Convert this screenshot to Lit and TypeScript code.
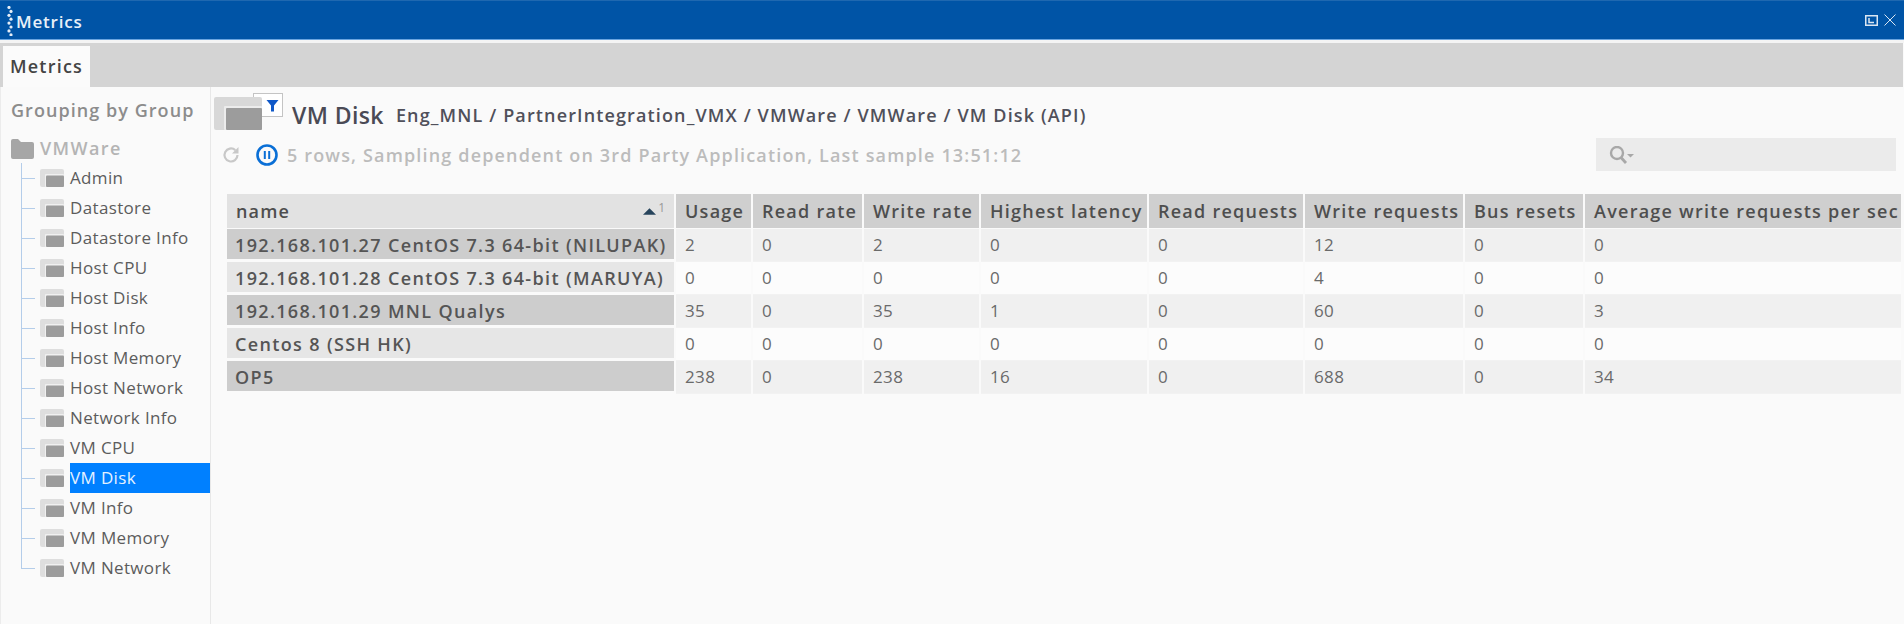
import { LitElement, html, css, svg } from "lit";
import { customElement } from "lit/decorators.js";

const tree = ["Admin","Datastore","Datastore Info","Host CPU","Host Disk","Host Info","Host Memory","Host Network","Network Info","VM CPU","VM Disk","VM Info","VM Memory","VM Network"];
const cols = ["Usage","Read rate","Write rate","Highest latency","Read requests","Write requests","Bus resets","Average write requests per sec"];
const rows: [string, ...number[]][] = [
  ["192.168.101.27 CentOS 7.3 64-bit (NILUPAK)",2,0,2,0,0,12,0,0],
  ["192.168.101.28 CentOS 7.3 64-bit (MARUYA)",0,0,0,0,0,4,0,0],
  ["192.168.101.29 MNL Qualys",35,0,35,1,0,60,0,3],
  ["Centos 8 (SSH HK)",0,0,0,0,0,0,0,0],
  ["OP5",238,0,238,16,0,688,0,34],
];

const tableIcon = svg`<svg class="ti" width="24" height="18" viewBox="0 0 24 18"><rect x="0" y="0" width="24" height="18" rx="2" fill="#dedede"/><rect x="5" y="5" width="19" height="13" rx="1" fill="#f0f0f0"/><rect x="6" y="6.5" width="18" height="11.5" rx="1" fill="#9c9c9c"/></svg>`;

@customElement("app-root")
export class AppRoot extends LitElement {
  static styles = css`
    :host { display: block; width: 1904px; height: 624px; overflow: hidden; background: #fafafa; font-family: "Open Sans", "Noto Sans", sans-serif; color: #4d4d4d; }
    .titlebar { background: #0054a6; border-top: 1px solid #1f68b0; border-bottom: 1px solid #6aa5e0; height: 38px; display: flex; align-items: center; color: #e8f0f8; font-size: 17px; font-weight: 600; padding-left: 7px; }
    .grip { width: 6px; height: 30px; margin-right: 3px; margin-top: 2px; flex: none; }
    .title { flex: 1; letter-spacing: 0.8px; padding-top: 3px; }
    .winbtns { display: flex; gap: 6px; align-items: center; padding-right: 8px; }
    .gap { height: 3px; background: #f4f4f4; }
    .tabbar { height: 44px; background: #d4d4d4; padding: 3px 0 0 3px; box-sizing: border-box; margin-right: 1px; }
    .tab { width: 87px; height: 41px; padding-bottom: 2px; background: #fbfbfb; box-sizing: border-box; display: flex; align-items: center; justify-content: center; font-size: 18px; font-weight: 600; letter-spacing: 1.2px; color: #444; }
    .body { display: flex; height: 537px; border-left: 1px solid #ececec; }
    .side { width: 209px; flex: none; border-right: 1px solid #e8e8e8; }
    .group { height: 27px; margin: 10px 0 0 10px; font-size: 18px; font-weight: 600; color: #8c8c8c; letter-spacing: 1.05px; line-height: 27px; white-space: nowrap; }
    .root { display: flex; align-items: center; margin: 9px 0 0 9px; height: 30px; gap: 6px; font-size: 18px; font-weight: 600; color: #b4b4b4; letter-spacing: 1.4px; }
    .tree { margin-left: 20px; position: relative; }
    .vline { position: absolute; left: 0; top: 0; height: 406px; width: 1px; background: #b4cdea; }
    .node { height: 30px; display: flex; align-items: center; font-size: 17px; color: #5c5c5c; letter-spacing: 0.35px; }
    .hline { width: 14px; height: 1px; background: #b4cdea; flex: none; margin-right: 5px; }
    .ti { flex: none; margin-right: 6px; display: block; }
    .lbl { flex: 1; height: 30px; line-height: 30px; white-space: nowrap; }
    .lbl.sel { background: #0080ff; color: #e4f1ff; }
    .main { flex: 1; min-width: 0; display: flex; flex-direction: column; padding-left: 16px; }
    .head { display: flex; align-items: center; height: 45px; margin: 5px 0 0 -13px; }
    .bigicon { position: relative; width: 78px; height: 45px; flex: none; }
    .filter { position: absolute; left: 39px; top: 1px; width: 30px; height: 24px; padding-left: 9px; background: #fff; border: 1px solid #c4c4c4; box-sizing: border-box; display: flex; align-items: center; justify-content: center; }
    .mainicon { position: absolute; left: 0; top: 5px; }
    .vm { font-size: 23px; font-weight: 600; color: #4a4a55; letter-spacing: 0.4px; white-space: nowrap; }
    .path { font-size: 18px; font-weight: 600; color: #50505a; letter-spacing: 1.13px; margin-left: 12px; white-space: nowrap; }
    .status { display: flex; align-items: center; height: 33px; margin: 1px 0 0 -5px; }
    .status .txt { font-size: 18px; font-weight: 600; color: #bcbcbc; letter-spacing: 1.16px; margin-left: 9px; white-space: nowrap; flex: 1; }
    .refresh { margin: 0 16px 0 0; flex: none; }
    .pause { flex: none; }
    .search { width: 300px; height: 33px; background: #ebebeb; margin-right: 8px; display: flex; align-items: center; padding-left: 13px; box-sizing: border-box; }
    .table { display: grid; grid-template-columns: 447px 75px 109px 115px 166px 154px 158px 118px 316px; column-gap: 2px; margin-top: 23px; font-size: 17px; width: 1674px; }
    .th { height: 34px; background: #cfcfcf; display: flex; align-items: center; padding-left: 9px; box-sizing: border-box; font-weight: 600; letter-spacing: 1.25px; color: #4e4e4e; white-space: nowrap; overflow: hidden; font-size: 18px; margin-bottom: 1px; }
    .th.n { background: #e2e2e2; position: relative; letter-spacing: 1.15px; }
    .sort { position: absolute; right: 9px; top: 7px; display: flex; align-items: flex-start; gap: 2px; font-size: 12px; font-weight: 400; color: #999; letter-spacing: 0; line-height: 14px; }
    .arrow { margin-top: 6px; }
    .td { height: 33px; display: flex; align-items: center; padding: 0 0 1px 9px; box-sizing: border-box; color: #6a6a6a; letter-spacing: 0.4px; white-space: nowrap; overflow: hidden; border-bottom: 1px solid #f2f2f2; }
    .td.a { background: #f0f0f0; }
    .td.b { background: #fcfcfc; }
    .td.n { font-weight: 600; font-size: 18px; color: #555; letter-spacing: 1.35px; padding: 2px 0 0 8px; margin-bottom: 3px; height: 30px; border: 0; }
    .td.n.a { background: #cdcdcd; }
    .td.n.b { background: #e6e6e6; }
  `;

  render() {
    return html`
      <div class="titlebar">
        <svg class="grip" viewBox="0 0 6 30"><g fill="#e6eef7">${[0,1,2,3,4,5,6,7].map(i => svg`<circle cx="${i % 2 ? 4 : 2}" cy="${1.5 + i * 3.9}" r="1.6"/>`)}</g></svg>
        <div class="title">Metrics</div>
        <div class="winbtns">
          <svg width="13" height="11" viewBox="0 0 13 11"><rect x="0.75" y="0.75" width="11.5" height="9.5" fill="none" stroke="#dbe6f2" stroke-width="1.5"/><path d="M4 3v4.5h5" fill="none" stroke="#dbe6f2" stroke-width="1.5"/></svg>
          <svg width="12" height="12" viewBox="0 0 12 12"><path d="M.5.5l11 11M11.5.5l-11 11" stroke="#dbe6f2" stroke-width="1"/></svg>
        </div>
      </div>
      <div class="gap"></div>
      <div class="tabbar"><div class="tab">Metrics</div></div>
      <div class="body">
        <div class="side">
          <div class="group">Grouping by Group</div>
          <div class="root">
            <svg width="24" height="21" viewBox="0 0 24 21"><path d="M1 3a2 2 0 0 1 2-2h5l3 3h11a2 2 0 0 1 2 2v13a2 2 0 0 1-2 2H3a2 2 0 0 1-2-2z" fill="#a6a6a6"/></svg>
            <span>VMWare</span>
          </div>
          <div class="tree">
            <div class="vline"></div>
            ${tree.map(t => html`<div class="node"><span class="hline"></span>${tableIcon}<span class="lbl ${t === "VM Disk" ? "sel" : ""}">${t}</span></div>`)}
          </div>
        </div>
        <div class="main">
          <div class="head">
            <div class="bigicon">
              <div class="filter"><svg width="13" height="13" viewBox="0 0 13 13"><path d="M.5 1h12L8 6.5V12.5H5V6.5z" fill="#0f58c8"/></svg></div>
              <svg class="mainicon" width="48" height="33" viewBox="0 0 48 33"><rect width="48" height="33" rx="2" fill="#d8d8d8"/><rect x="10" y="9" width="38" height="24" rx="1" fill="#ececec"/><rect x="12" y="11" width="36" height="22" rx="1" fill="#9c9c9c"/></svg>
            </div>
            <span class="vm">VM Disk</span>
            <span class="path">Eng_MNL / PartnerIntegration_VMX / VMWare / VMWare / VM Disk (API)</span>
          </div>
          <div class="status">
            <svg class="refresh" width="18" height="18" viewBox="0 0 18 18"><path d="M15.5 9a6.5 6.5 0 1 1-2.2-4.9" fill="none" stroke="#c8c8c8" stroke-width="2.2"/><path d="M16.5 1v6.5h-6.5z" fill="#c8c8c8"/></svg>
            <svg class="pause" width="22" height="22" viewBox="0 0 22 22"><circle cx="11" cy="11" r="9.5" fill="none" stroke="#0a6fd6" stroke-width="2.6"/><path d="M8.8 7v8M13.2 7v8" stroke="#0a6fd6" stroke-width="2"/></svg>
            <span class="txt">5 rows, Sampling dependent on 3rd Party Application, Last sample 13:51:12</span>
            <div class="search"><svg width="26" height="18" viewBox="0 0 26 18"><circle cx="8" cy="7" r="6" fill="none" stroke="#a8a8a8" stroke-width="2.4"/><path d="M12 11.5l5 5.5" stroke="#a8a8a8" stroke-width="2.8"/><path d="M18 8h7l-3.5 3.5z" fill="#a8a8a8"/></svg></div>
          </div>
          <div class="table">
            <div class="th n">name<span class="sort"><svg class="arrow" width="13" height="8" viewBox="0 0 14 8"><path d="M0 8L7 1l7 7z" fill="#27445c"/></svg>1</span></div>
            ${cols.map(c => html`<div class="th">${c}</div>`)}
            ${rows.map((r, i) => {
              const k = i % 2 ? "b" : "a";
              return html`<div class="td n ${k}">${r[0]}</div>${r.slice(1).map(v => html`<div class="td ${k}">${v}</div>`)}`;
            })}
          </div>
        </div>
      </div>
    `;
  }
}
